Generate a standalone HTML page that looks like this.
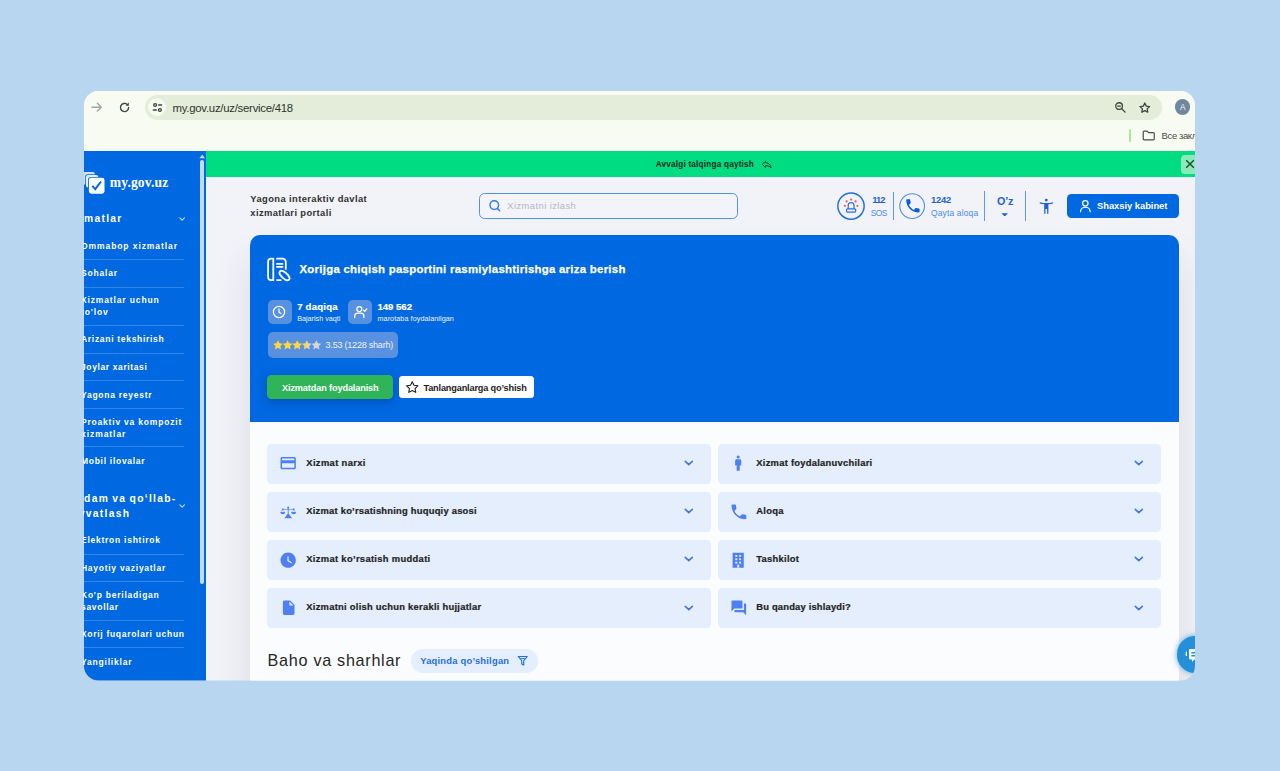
<!DOCTYPE html>
<html lang="uz">
<head>
<meta charset="utf-8">
<title>my.gov.uz — Xorijga chiqish pasportini rasmiylashtirishga ariza berish</title>
<style>
html,body{margin:0;padding:0;}
body{width:1280px;height:771px;overflow:hidden;background:#b9d6f0;position:relative;font-family:"Liberation Sans",sans-serif;}
#win{position:absolute;left:0;top:0;width:1280px;height:771px;clip-path:inset(91px 85px 90.600px 84px round 14.500px);background:#f2f3f8;}
.b{position:absolute;display:block;box-sizing:border-box;}
.t{position:absolute;white-space:nowrap;display:block;}
#nav{position:absolute;left:0;top:0;width:1280px;height:771px;clip-path:inset(151px 1074px 91px 83px);pointer-events:none;}

</style>
</head>
<body>
<div id="win">
<div class="b" style="left:84px;top:91px;width:1112px;height:60.400000000000006px;background:#f8fbf2;border-radius:0px;"></div>
<div class="b" style="left:145px;top:95px;width:1017px;height:25px;background:#e4edda;border-radius:12.5px;"></div>
<svg class="b" style="left:90px;top:101px;" width="13" height="13" viewBox="0 0 13 13"><path d="M1.900 6.200h9.300M7.400 2.300l3.900 3.900-3.900 3.900" fill="none" stroke="#a3a7a0" stroke-width="1.400" stroke-linecap="round" stroke-linejoin="round"/></svg>
<svg class="b" style="left:118px;top:100.5px;" width="13" height="13" viewBox="0 0 24 24"><path d="M19.500 12a7.500 7.500 0 1 1-2.400-5.500" fill="none" stroke="#3e453c" stroke-width="2.500" stroke-linecap="round"/><path d="M20 2.800v6h-6z" fill="#3e453c"/></svg>
<div class="b" style="left:148px;top:98px;width:18px;height:18px;background:#f6faf1;border-radius:9px;"></div>
<svg class="b" style="left:151.5px;top:101.5px;" width="11" height="11" viewBox="0 0 24 24"><g fill="none" stroke="#3e453c" stroke-width="2.900" stroke-linecap="round"><circle cx="6.800" cy="6.500" r="3.100"/><path d="M14.500 6.500h6.500"/><circle cx="17.200" cy="17.500" r="3.100"/><path d="M3 17.500h6.500"/></g></svg>
<span class="t " style="left:172.50px;top:101.00px;font-size:11.4px;line-height:15px;font-weight:400;color:#30342d;letter-spacing:-0.267px;font-family:'Liberation Sans',sans-serif;">my.gov.uz/uz/service/418</span>
<svg class="b" style="left:1114px;top:101.3px;" width="13" height="13" viewBox="0 0 24 24"><g fill="none" stroke="#3e453c" stroke-width="2.400" stroke-linecap="round"><circle cx="9.400" cy="9.400" r="6.200"/><path d="M14.200 14.200l6.300 6.300M6.800 9.400h5.200"/></g></svg>
<svg class="b" style="left:1137.9px;top:100.7px;" width="13.6" height="13.6" viewBox="0 0 24 24"><path d="M12 3.600l2.600 5.400 5.900.8-4.300 4.100 1 5.900-5.200-2.800-5.200 2.800 1-5.900-4.300-4.100 5.900-.8z" fill="none" stroke="#3e453c" stroke-width="2.300" stroke-linejoin="round"/></svg>
<div class="b" style="left:1174.6px;top:99.4px;width:15.600000000000136px;height:15.599999999999994px;background:#70889d;border-radius:8px;"></div>
<span class="t " style="left:1179.90px;top:102.00px;font-size:8.2px;line-height:11px;font-weight:400;color:#f3f6f8;letter-spacing:0.000px;font-family:'Liberation Sans',sans-serif;">A</span>
<div class="b" style="left:1129.1px;top:129.3px;width:1.7000000000000455px;height:12.699999999999989px;background:#aee596;border-radius:1px;"></div>
<svg class="b" style="left:1142.2px;top:130.2px;" width="13.5" height="10.8" viewBox="0 0 27 21.600"><path d="M2.500 4.200a1.800 1.800 0 0 1 1.800-1.800h6.200l2.600 2.700h9.600a1.800 1.800 0 0 1 1.800 1.800v10.900a1.800 1.800 0 0 1-1.800 1.800H4.300a1.800 1.800 0 0 1-1.800-1.800z" fill="none" stroke="#4a4e47" stroke-width="2.400" stroke-linejoin="round"/></svg>
<span class="t " style="left:1161.60px;top:130.00px;font-size:9.5px;line-height:12px;font-weight:400;color:#4a4e47;letter-spacing:-0.400px;font-family:'Liberation Sans',sans-serif;">Все закладки</span>
<div class="b" style="left:84px;top:151px;width:122px;height:530px;background:#0068e1;border-radius:0px;"></div>
<div class="b" style="left:200px;top:160.2px;width:4px;height:424.09999999999997px;background:#c4d9f2;border-radius:2px;"></div>
<svg class="b" style="left:198.8px;top:153.5px;" width="6.4" height="5" viewBox="0 0 6.400 5"><path d="M3.200 0.500L6 4.300H0.400z" fill="#c4d9f2"/></svg>
<svg class="b" style="left:82px;top:171px;" width="24" height="24" viewBox="0 0 24 24"><g>
<rect x="0.600" y="1.100" width="12.400" height="12.400" rx="2.300" fill="#cfe0f8"/>
<rect x="3.200" y="3.200" width="14" height="14" rx="2.600" fill="#0068e1"/>
<rect x="4" y="4" width="12.400" height="12.400" rx="2.200" fill="#e7f0fc"/>
<rect x="6" y="5.900" width="17.200" height="17.600" rx="3" fill="#0068e1"/>
<rect x="6.900" y="6.800" width="15.600" height="15.900" rx="2.400" fill="#ffffff"/>
<path d="M10.300 14.900l3 3.200 5.700-7.600" fill="none" stroke="#0068e1" stroke-width="2"/>
</g></svg>
<span class="t " style="left:109.80px;top:174.00px;font-size:13.6px;line-height:18px;font-weight:700;color:#fff;letter-spacing:0.121px;font-family:'Liberation Serif',serif;">my.gov.uz</span>
<svg class="b" style="left:179.3px;top:217.2px;" width="6.2" height="4.2" viewBox="0 0 6.200 4.200"><path d="M0.800 0.900l2.300 2.300 2.300-2.300" fill="none" stroke="#c9dcf8" stroke-width="1.100" stroke-linecap="round" stroke-linejoin="round"/></svg>
<div class="b" style="left:84px;top:259px;width:100px;height:1px;background:rgba(255,255,255,0.200);border-radius:0px;"></div>
<div class="b" style="left:84px;top:287px;width:100px;height:1px;background:rgba(255,255,255,0.200);border-radius:0px;"></div>
<div class="b" style="left:84px;top:325px;width:100px;height:1px;background:rgba(255,255,255,0.200);border-radius:0px;"></div>
<div class="b" style="left:84px;top:353px;width:100px;height:1px;background:rgba(255,255,255,0.200);border-radius:0px;"></div>
<div class="b" style="left:84px;top:380px;width:100px;height:1px;background:rgba(255,255,255,0.200);border-radius:0px;"></div>
<div class="b" style="left:84px;top:408px;width:100px;height:1px;background:rgba(255,255,255,0.200);border-radius:0px;"></div>
<div class="b" style="left:84px;top:446px;width:100px;height:1px;background:rgba(255,255,255,0.200);border-radius:0px;"></div>
<svg class="b" style="left:179.3px;top:504.2px;" width="6.2" height="4.2" viewBox="0 0 6.200 4.200"><path d="M0.800 0.900l2.300 2.300 2.300-2.300" fill="none" stroke="#c9dcf8" stroke-width="1.100" stroke-linecap="round" stroke-linejoin="round"/></svg>
<div class="b" style="left:84px;top:554px;width:100px;height:1px;background:rgba(255,255,255,0.200);border-radius:0px;"></div>
<div class="b" style="left:84px;top:581px;width:100px;height:1px;background:rgba(255,255,255,0.200);border-radius:0px;"></div>
<div class="b" style="left:84px;top:620px;width:100px;height:1px;background:rgba(255,255,255,0.200);border-radius:0px;"></div>
<div class="b" style="left:84px;top:647px;width:100px;height:1px;background:rgba(255,255,255,0.200);border-radius:0px;"></div>
<div class="b" style="left:206px;top:151.4px;width:990px;height:25.599999999999994px;background:#00dc82;border-radius:0px;"></div>
<span class="t " style="left:655.70px;top:159.00px;font-size:8.2px;line-height:11px;font-weight:700;color:#0f2a1a;letter-spacing:0.206px;font-family:'Liberation Sans',sans-serif;">Avvalgi talqinga qaytish</span>
<svg class="b" style="left:760.5px;top:159.7px;" width="11.5" height="9" viewBox="0 0 23 18"><path d="M9 2.500L2.500 8.800 9 15v-3.800c5 0 8.300 1.300 11.300 4.600-.7-5.600-4-10-11.300-10.400z" fill="none" stroke="#143a24" stroke-width="1.900" stroke-linejoin="round"/></svg>
<div class="b" style="left:1181px;top:155.4px;width:19px;height:18.19999999999999px;background:#8aeab8;border-radius:4px;"></div>
<svg class="b" style="left:1184.5px;top:158.6px;" width="10" height="10" viewBox="0 0 10 10"><path d="M1.200 1.200l7.600 7.600M8.800 1.200L1.200 8.800" fill="none" stroke="#1b4a30" stroke-width="1.400"/></svg>
<span class="t " style="left:250.30px;top:193.00px;font-size:9.4px;line-height:12px;font-weight:700;color:#303030;letter-spacing:0.395px;font-family:'Liberation Sans',sans-serif;">Yagona interaktiv davlat</span>
<span class="t " style="left:250.30px;top:207.00px;font-size:9.4px;line-height:12px;font-weight:700;color:#303030;letter-spacing:0.382px;font-family:'Liberation Sans',sans-serif;">xizmatlari portali</span>
<div class="b" style="left:479px;top:193px;width:259px;height:26px;background:#f3f4f9;border-radius:5.5px;border:1.100px solid #4f92e8;"></div>
<svg class="b" style="left:487.5px;top:198.5px;" width="13" height="13" viewBox="0 0 13 13"><circle cx="6.300" cy="6.100" r="4.300" fill="none" stroke="#2f7be5" stroke-width="1.400"/><path d="M9.500 9.600l2.100 2.200" stroke="#2f7be5" stroke-width="1.500" stroke-linecap="round"/></svg>
<span class="t " style="left:507.30px;top:200.00px;font-size:9.4px;line-height:12px;font-weight:400;color:#b4b6bd;letter-spacing:0.429px;font-family:'Liberation Sans',sans-serif;">Xizmatni izlash</span>
<svg class="b" style="left:836px;top:191px;" width="30" height="30" viewBox="836 191 30 30"><circle cx="851" cy="206.050" r="13.150" fill="none" stroke="#1f6fe0" stroke-width="1.500"/>
<g fill="none" stroke="#2a6fe3" stroke-width="1.250" stroke-linejoin="round">
<path d="M848.200 208.700v-3.300a2.900 2.900 0 0 1 5.800 0v3.300"/><rect x="846.500" y="208.900" width="9.200" height="3.100" rx="1.100"/></g>
<g fill="#ff4d5a"><circle cx="851.100" cy="199.600" r="1.080"/><circle cx="846.600" cy="201.400" r="1.080"/><circle cx="855.600" cy="201.400" r="1.080"/><circle cx="844.800" cy="205.800" r="1.080"/><circle cx="857.400" cy="205.800" r="1.080"/></g></svg>
<span class="t " style="left:872.30px;top:194.00px;font-size:9.4px;line-height:12px;font-weight:700;color:#1d62d6;letter-spacing:-0.950px;font-family:'Liberation Sans',sans-serif;">112</span>
<span class="t " style="left:870.80px;top:208.00px;font-size:8.4px;line-height:11px;font-weight:400;color:#4a8be6;letter-spacing:-0.620px;font-family:'Liberation Sans',sans-serif;">SOS</span>
<div class="b" style="left:892.9px;top:192px;width:1.3999999999999773px;height:28px;background:#5d9ae9;border-radius:0px;"></div>
<svg class="b" style="left:898px;top:192px;" width="28" height="28" viewBox="898 192 28 28"><circle cx="912.150" cy="206.100" r="12.350" fill="none" stroke="#4f8ee6" stroke-width="1.100"/></svg>
<svg class="b" style="left:903.5px;top:197.4px;" width="17.8" height="17.8" viewBox="0 0 24 24"><path d="M6.620 10.790c1.440 2.830 3.760 5.140 6.590 6.590l2.200-2.200c.270-.270.670-.360 1.020-.240 1.120.370 2.330.570 3.570.570.550 0 1 .450 1 1V20c0 .550-.450 1-1 1-9.390 0-17-7.610-17-17 0-.550.450-1 1-1h3.500c.550 0 1 .450 1 1 0 1.250.200 2.450.570 3.570.110.350.030.740-.250 1.020l-2.200 2.200z" fill="#0a5cdc"/></svg>
<span class="t " style="left:931.00px;top:194.00px;font-size:9.4px;line-height:12px;font-weight:700;color:#1d62d6;letter-spacing:-0.237px;font-family:'Liberation Sans',sans-serif;">1242</span>
<span class="t " style="left:931.00px;top:208.00px;font-size:8.4px;line-height:11px;font-weight:400;color:#4a8be6;letter-spacing:0.190px;font-family:'Liberation Sans',sans-serif;">Qayta aloqa</span>
<div class="b" style="left:983.8px;top:191px;width:1.400000000000091px;height:30px;background:#5d9ae9;border-radius:0px;"></div>
<span class="t " style="left:997.00px;top:194.00px;font-size:10.8px;line-height:14px;font-weight:700;color:#1d62d6;letter-spacing:-0.151px;font-family:'Liberation Sans',sans-serif;">O’z</span>
<svg class="b" style="left:1001.2px;top:212.6px;" width="7.4" height="3.8" viewBox="0 0 7.400 3.800"><path d="M0.400 0.300h6.600L3.700 3.600z" fill="#1d62d6"/></svg>
<div class="b" style="left:1025.1px;top:191px;width:1.400000000000091px;height:30px;background:#5d9ae9;border-radius:0px;"></div>
<svg class="b" style="left:1039px;top:198px;" width="15" height="16.5" viewBox="1039 198 15 16.500"><circle cx="1046.300" cy="200.100" r="1.450" fill="#1d62d6"/><path d="M1039.900 202.200c2.100.600 4.200.900 6.400.900s4.300-.300 6.400-.900l.300 1.200c-1.500.450-3 .750-4.600.900v9.400h-1.300v-4.600h-1.600v4.600h-1.300v-9.400c-1.600-.150-3.100-.450-4.600-.900z" fill="#1d62d6"/></svg>
<div class="b" style="left:1066.8px;top:194px;width:112.20000000000005px;height:24px;background:#0068e1;border-radius:4.5px;"></div>
<svg class="b" style="left:1079px;top:199px;" width="13" height="14" viewBox="1079 199 13 14"><g fill="none" stroke="#fff" stroke-width="1.250" stroke-linecap="round"><circle cx="1085.300" cy="203.300" r="2.700"/><path d="M1080.500 211.700a4.850 4.700 0 0 1 9.700 0"/></g></svg>
<span class="t " style="left:1097.00px;top:200.00px;font-size:9.4px;line-height:12px;font-weight:700;color:#fff;letter-spacing:-0.033px;font-family:'Liberation Sans',sans-serif;">Shaxsiy kabinet</span>
<div class="b" style="left:250px;top:235px;width:929px;height:465px;background:#fbfcfe;border-radius:10px;box-shadow:0 26px 40px 2px rgba(20,25,40,0.090);"></div>
<div class="b" style="left:250px;top:235px;width:929px;height:187px;background:#0068e1;border-radius:0px;border-radius:10px 10px 0 0;"></div>
<svg class="b" style="left:266px;top:257px;" width="26" height="26" viewBox="266 257 26 26"><g fill="none" stroke="#fff" stroke-width="1.800" stroke-linecap="round" stroke-linejoin="round">
<path d="M273.300 258.700H271.200a3.100 3.100 0 0 0-3.100 3.100v15.300a3.100 3.100 0 0 0 3.100 3.100h2.100z"/>
<path d="M277 258.700h5.500a3.300 3.300 0 0 1 3.300 3.300v6.900"/>
<path d="M277 263.900h5.500M277 266.900h5.500"/>
<path d="M277 280.100h3.700"/>
<ellipse cx="284.500" cy="275.500" rx="6.200" ry="2.800" transform="rotate(43 284.500 275.500)"/>
</g></svg>
<span class="t " style="left:299.50px;top:262.00px;font-size:11.4px;line-height:15px;font-weight:700;color:#fff;letter-spacing:0.275px;font-family:'Liberation Sans',sans-serif;-webkit-text-stroke:0.250px #fff;">Xorijga chiqish pasportini rasmiylashtirishga ariza berish</span>
<div class="b" style="left:268px;top:300px;width:24px;height:24px;background:#5791df;border-radius:5px;"></div>
<svg class="b" style="left:272.4px;top:304.8px;" width="14" height="14" viewBox="0 0 14 14"><g fill="none" stroke="#fff" stroke-width="1.250" stroke-linecap="round" stroke-linejoin="round"><circle cx="7" cy="7" r="5.600"/><path d="M7 3.900v3.300l2 1.300"/></g></svg>
<span class="t " style="left:297.20px;top:301.00px;font-size:9.6px;line-height:12px;font-weight:700;color:#fff;letter-spacing:0.208px;font-family:'Liberation Sans',sans-serif;-webkit-text-stroke:0.200px #fff;">7 daqiqa</span>
<span class="t " style="left:297.20px;top:314.00px;font-size:7.2px;line-height:9px;font-weight:400;color:#f1f6fd;letter-spacing:0.006px;font-family:'Liberation Sans',sans-serif;">Bajarish vaqti</span>
<div class="b" style="left:348.3px;top:300px;width:23.69999999999999px;height:24px;background:#5791df;border-radius:5px;"></div>
<svg class="b" style="left:353.2px;top:304.6px;" width="15" height="14" viewBox="0 0 15 14"><g fill="none" stroke="#fff" stroke-width="1.300" stroke-linecap="round" stroke-linejoin="round"><circle cx="6.300" cy="4.100" r="2.500"/><path d="M1.700 12.500v-1.300a3.100 3.100 0 0 1 3.100-3.100h3a3.100 3.100 0 0 1 3.100 3.100v1.300"/><path d="M10.600 5.300l1.100 1.100 2-2.400"/></g></svg>
<span class="t " style="left:377.50px;top:301.00px;font-size:9.6px;line-height:12px;font-weight:700;color:#fff;letter-spacing:-0.034px;font-family:'Liberation Sans',sans-serif;-webkit-text-stroke:0.200px #fff;">149 562</span>
<span class="t " style="left:377.50px;top:314.00px;font-size:7.2px;line-height:9px;font-weight:400;color:#f1f6fd;letter-spacing:0.078px;font-family:'Liberation Sans',sans-serif;">marotaba foydalanilgan</span>
<div class="b" style="left:268px;top:332px;width:130px;height:25.5px;background:#5791df;border-radius:5px;"></div>
<svg class="b" style="left:272.8px;top:339.8px;" width="49" height="10" viewBox="0 0 49 10"><defs><linearGradient id="hs" x1="0" x2="1" y1="0" y2="0"><stop offset="0.530" stop-color="#ffd93b"/><stop offset="0.530" stop-color="#d6d6d6"/></linearGradient></defs><path transform="translate(0.0,0)" d="M5 0.200l1.500 3.100 3.400.450-2.500 2.350.650 3.400L5 7.850 1.950 9.500l.650-3.400L0.100 3.750l3.400-.450z" fill="#ffd93b"/><path transform="translate(9.6,0)" d="M5 0.200l1.500 3.100 3.400.450-2.500 2.350.650 3.400L5 7.850 1.950 9.500l.650-3.400L0.100 3.750l3.400-.450z" fill="#ffd93b"/><path transform="translate(19.2,0)" d="M5 0.200l1.500 3.100 3.400.450-2.500 2.350.650 3.400L5 7.850 1.950 9.500l.650-3.400L0.100 3.750l3.400-.450z" fill="#ffd93b"/><path transform="translate(28.799999999999997,0)" d="M5 0.200l1.500 3.100 3.400.450-2.500 2.350.650 3.400L5 7.850 1.950 9.500l.650-3.400L0.100 3.750l3.400-.450z" fill="url(#hs)"/><path transform="translate(38.4,0)" d="M5 0.200l1.500 3.100 3.400.450-2.500 2.350.650 3.400L5 7.850 1.950 9.500l.650-3.400L0.100 3.750l3.400-.450z" fill="#d6d6d6"/></svg>
<span class="t " style="left:325.60px;top:339.00px;font-size:9px;line-height:12px;font-weight:400;color:#eef4fd;letter-spacing:-0.215px;font-family:'Liberation Sans',sans-serif;">3.53 (1228 sharh)</span>
<div class="b" style="left:267.3px;top:375px;width:125.69999999999999px;height:24px;background:#2fb457;border-radius:4.5px;box-shadow:0 3px 9px 1px rgba(0,40,110,0.280);"></div>
<span class="t " style="left:282.00px;top:382.00px;font-size:9.2px;line-height:12px;font-weight:700;color:#fff;letter-spacing:-0.144px;font-family:'Liberation Sans',sans-serif;">Xizmatdan foydalanish</span>
<div class="b" style="left:398.8px;top:376.3px;width:135.2px;height:22.0px;background:#ffffff;border-radius:3.5px;"></div>
<svg class="b" style="left:404.8px;top:380.4px;" width="14.5" height="14.5" viewBox="0 0 24 24"><path d="M12 2.800l2.850 5.900 6.450.9-4.700 4.500 1.150 6.400L12 17.450 6.250 20.500l1.150-6.400-4.700-4.500 6.450-.9z" fill="none" stroke="#1d1d1d" stroke-width="1.800" stroke-linejoin="round"/></svg>
<span class="t " style="left:423.40px;top:382.00px;font-size:9.2px;line-height:12px;font-weight:700;color:#1d1d1d;letter-spacing:-0.170px;font-family:'Liberation Sans',sans-serif;">Tanlanganlarga qo’shish</span>
<div class="b" style="left:267.4px;top:443.5px;width:443.6px;height:40.30000000000001px;background:#e5eefc;border-radius:4.5px;"></div>
<div class="b" style="left:717.8px;top:443.5px;width:443.5px;height:40.30000000000001px;background:#e5eefc;border-radius:4.5px;"></div>
<svg class="b" style="left:279.4px;top:454.45px;" width="18.4" height="18.4" viewBox="0 0 24 24"><path d="M20 4H4c-1.110 0-1.990.890-1.990 2L2 18c0 1.110.890 2 2 2h16c1.110 0 2-.890 2-2V6c0-1.110-.890-2-2-2zm0 14H4v-6h16v6zm0-10H4V6h16v2z" fill="#4f80f3"/></svg>
<svg class="b" style="left:729.4px;top:454.45px;" width="18.4" height="18.4" viewBox="0 0 24 24"><circle cx="12" cy="4" r="2" fill="#4f80f3"/><path d="M14 7h-4c-1.100 0-2 .900-2 2v6h2v7h4v-7h2V9c0-1.100-.900-2-2-2z" fill="#4f80f3"/></svg>
<span class="t " style="left:306.30px;top:457.00px;font-size:9.4px;line-height:12px;font-weight:700;color:#1f1f1f;letter-spacing:0.348px;font-family:'Liberation Sans',sans-serif;-webkit-text-stroke:0.220px #1f1f1f;">Xizmat narxi</span>
<span class="t " style="left:756.30px;top:457.00px;font-size:9.4px;line-height:12px;font-weight:700;color:#1f1f1f;letter-spacing:0.260px;font-family:'Liberation Sans',sans-serif;-webkit-text-stroke:0.220px #1f1f1f;">Xizmat foydalanuvchilari</span>
<svg class="b" style="left:683.9px;top:460.35px;" width="9.6" height="6" viewBox="0 0 9.600 6"><path d="M1.300 1.400l3.500 3.200 3.500-3.200" fill="none" stroke="#3f74ef" stroke-width="1.600" stroke-linecap="round" stroke-linejoin="round"/></svg>
<svg class="b" style="left:1134.2px;top:460.35px;" width="9.6" height="6" viewBox="0 0 9.600 6"><path d="M1.300 1.400l3.500 3.200 3.500-3.200" fill="none" stroke="#3f74ef" stroke-width="1.600" stroke-linecap="round" stroke-linejoin="round"/></svg>
<div class="b" style="left:267.4px;top:491.55px;width:443.6px;height:40.30000000000001px;background:#e5eefc;border-radius:4.5px;"></div>
<div class="b" style="left:717.8px;top:491.55px;width:443.5px;height:40.30000000000001px;background:#e5eefc;border-radius:4.5px;"></div>
<svg class="b" style="left:279.4px;top:502.5px;" width="18.4" height="18.4" viewBox="0 0 18.400 18.400"><g fill="#4f80f3"><circle cx="9.200" cy="4.400" r="1"/>
<path d="M8.750 4.400h.9v6.200l3.300 4.600H5.450l3.300-4.600z"/>
<path d="M2.700 5.900h13v.850h-13z" opacity="0.750"/>
<rect x="2.900" y="5.400" width="1.700" height="1.800" rx="0.300" opacity="0.850"/><rect x="13.800" y="5.400" width="1.700" height="1.800" rx="0.300" opacity="0.850"/>
<path d="M1.300 9h4.900a2.450 2.350 0 0 1-4.900 0zM12.200 9h4.900a2.450 2.350 0 0 1-4.900 0z"/>
<path d="M3.750 6.800L1.500 9h.8l1.450-1.400L5.200 9h.8zM14.650 6.800L12.400 9h.8l1.450-1.400L16.100 9h.8z" opacity="0.550"/></g></svg>
<svg class="b" style="left:728.7px;top:501.8px;" width="19.8" height="19.8" viewBox="0 0 24 24"><path d="M6.620 10.790c1.440 2.830 3.760 5.140 6.590 6.590l2.200-2.200c.270-.270.670-.360 1.020-.240 1.120.370 2.330.570 3.570.570.550 0 1 .450 1 1V20c0 .550-.450 1-1 1-9.390 0-17-7.610-17-17 0-.550.450-1 1-1h3.500c.550 0 1 .450 1 1 0 1.250.200 2.450.570 3.570.110.350.030.740-.250 1.020l-2.200 2.200z" fill="#4f80f3"/></svg>
<span class="t " style="left:306.30px;top:505.00px;font-size:9.4px;line-height:12px;font-weight:700;color:#1f1f1f;letter-spacing:0.228px;font-family:'Liberation Sans',sans-serif;-webkit-text-stroke:0.220px #1f1f1f;">Xizmat ko’rsatishning huquqiy asosi</span>
<span class="t " style="left:756.30px;top:505.00px;font-size:9.4px;line-height:12px;font-weight:700;color:#1f1f1f;letter-spacing:0.272px;font-family:'Liberation Sans',sans-serif;-webkit-text-stroke:0.220px #1f1f1f;">Aloqa</span>
<svg class="b" style="left:683.9px;top:508.4px;" width="9.6" height="6" viewBox="0 0 9.600 6"><path d="M1.300 1.400l3.500 3.200 3.500-3.200" fill="none" stroke="#3f74ef" stroke-width="1.600" stroke-linecap="round" stroke-linejoin="round"/></svg>
<svg class="b" style="left:1134.2px;top:508.4px;" width="9.6" height="6" viewBox="0 0 9.600 6"><path d="M1.300 1.400l3.500 3.200 3.500-3.200" fill="none" stroke="#3f74ef" stroke-width="1.600" stroke-linecap="round" stroke-linejoin="round"/></svg>
<div class="b" style="left:267.4px;top:539.6px;width:443.6px;height:40.299999999999955px;background:#e5eefc;border-radius:4.5px;"></div>
<div class="b" style="left:717.8px;top:539.6px;width:443.5px;height:40.299999999999955px;background:#e5eefc;border-radius:4.5px;"></div>
<svg class="b" style="left:279.4px;top:550.55px;" width="18.4" height="18.4" viewBox="0 0 24 24"><path d="M12 2C6.500 2 2 6.500 2 12s4.500 10 10 10 10-4.500 10-10S17.500 2 12 2zm4.200 14.200L11 13V7h1.500v5.200l4.500 2.700-.800 1.300z" fill="#4f80f3"/></svg>
<svg class="b" style="left:729.4px;top:550.55px;" width="18.4" height="18.4" viewBox="0 0 24 24"><path d="M4.700 2.300h14.600v19.500H4.700z" fill="#4f80f3"/><g fill="#e5eefc"><rect x="8.200" y="5.200" width="2.600" height="2.300"/><rect x="13.200" y="5.200" width="2.600" height="2.300"/><rect x="8.200" y="9.600" width="2.600" height="2.300"/><rect x="13.200" y="9.600" width="2.600" height="2.300"/><rect x="8.200" y="14" width="2.600" height="2.300"/><rect x="13.200" y="14" width="2.600" height="2.300"/><rect x="10.700" y="17.700" width="2.600" height="4.100"/></g></svg>
<span class="t " style="left:306.30px;top:553.00px;font-size:9.4px;line-height:12px;font-weight:700;color:#1f1f1f;letter-spacing:0.322px;font-family:'Liberation Sans',sans-serif;-webkit-text-stroke:0.220px #1f1f1f;">Xizmat ko’rsatish muddati</span>
<span class="t " style="left:756.30px;top:553.00px;font-size:9.4px;line-height:12px;font-weight:700;color:#1f1f1f;letter-spacing:0.267px;font-family:'Liberation Sans',sans-serif;-webkit-text-stroke:0.220px #1f1f1f;">Tashkilot</span>
<svg class="b" style="left:683.9px;top:556.45px;" width="9.6" height="6" viewBox="0 0 9.600 6"><path d="M1.300 1.400l3.500 3.200 3.500-3.200" fill="none" stroke="#3f74ef" stroke-width="1.600" stroke-linecap="round" stroke-linejoin="round"/></svg>
<svg class="b" style="left:1134.2px;top:556.45px;" width="9.6" height="6" viewBox="0 0 9.600 6"><path d="M1.300 1.400l3.500 3.200 3.500-3.200" fill="none" stroke="#3f74ef" stroke-width="1.600" stroke-linecap="round" stroke-linejoin="round"/></svg>
<div class="b" style="left:267.4px;top:587.65px;width:443.6px;height:40.299999999999955px;background:#e5eefc;border-radius:4.5px;"></div>
<div class="b" style="left:717.8px;top:587.65px;width:443.5px;height:40.299999999999955px;background:#e5eefc;border-radius:4.5px;"></div>
<svg class="b" style="left:279.9px;top:599.1px;" width="17.4" height="17.4" viewBox="0 0 24 24"><path d="M6 2c-1.100 0-1.990.900-1.990 2L4 20c0 1.100.890 2 1.990 2H18c1.100 0 2-.900 2-2V8l-6-6H6zm7 7V3.500L18.500 9H13z" fill="#4f80f3"/></svg>
<svg class="b" style="left:729.8px;top:599.0px;" width="17.6" height="17.6" viewBox="0 0 24 24"><path d="M21 6h-2v9H6v2c0 .550.450 1 1 1h11l4 4V7c0-.550-.450-1-1-1zm-4 6V3c0-.550-.450-1-1-1H3c-.550 0-1 .450-1 1v14l4-4h10c.550 0 1-.450 1-1z" fill="#4f80f3"/></svg>
<span class="t " style="left:306.30px;top:601.00px;font-size:9.4px;line-height:12px;font-weight:700;color:#1f1f1f;letter-spacing:0.260px;font-family:'Liberation Sans',sans-serif;-webkit-text-stroke:0.220px #1f1f1f;">Xizmatni olish uchun kerakli hujjatlar</span>
<span class="t " style="left:756.30px;top:601.00px;font-size:9.4px;line-height:12px;font-weight:700;color:#1f1f1f;letter-spacing:0.183px;font-family:'Liberation Sans',sans-serif;-webkit-text-stroke:0.220px #1f1f1f;">Bu qanday ishlaydi?</span>
<svg class="b" style="left:683.9px;top:604.5px;" width="9.6" height="6" viewBox="0 0 9.600 6"><path d="M1.300 1.400l3.500 3.200 3.500-3.200" fill="none" stroke="#3f74ef" stroke-width="1.600" stroke-linecap="round" stroke-linejoin="round"/></svg>
<svg class="b" style="left:1134.2px;top:604.5px;" width="9.6" height="6" viewBox="0 0 9.600 6"><path d="M1.300 1.400l3.500 3.200 3.500-3.200" fill="none" stroke="#3f74ef" stroke-width="1.600" stroke-linecap="round" stroke-linejoin="round"/></svg>
<span class="t " style="left:267.60px;top:650.00px;font-size:16.2px;line-height:21px;font-weight:400;color:#262626;letter-spacing:0.702px;font-family:'Liberation Sans',sans-serif;">Baho va sharhlar</span>
<div class="b" style="left:411.3px;top:649.3px;width:127.19999999999999px;height:23.5px;background:#e5eefc;border-radius:11.75px;"></div>
<span class="t " style="left:420.20px;top:655.00px;font-size:9.4px;line-height:12px;font-weight:700;color:#1f6fe0;letter-spacing:0.223px;font-family:'Liberation Sans',sans-serif;">Yaqinda qo’shilgan</span>
<svg class="b" style="left:516.5px;top:655px;" width="11.5" height="12" viewBox="0 0 23 24"><path d="M2.500 3h18l-7 8.500V20l-4-2.200v-6.300z" fill="none" stroke="#1f6fe0" stroke-width="2.300" stroke-linejoin="round"/><path d="M6.500 7.300h10" stroke="#1f6fe0" stroke-width="2"/></svg>
<div class="b" style="left:1176.5px;top:636.3px;width:36.59999999999991px;height:36.60000000000002px;background:#2590d9;border-radius:18.3px;box-shadow:0 0 5px 1px rgba(37,144,217,0.550);"></div>
<svg class="b" style="left:1184.5px;top:647.5px;" width="16" height="15" viewBox="1184.500 647.500 16 15"><rect x="1185.200" y="651.100" width="1.300" height="4.500" rx="0.500" fill="#fff"/><path d="M1188.600 648.400h11.900v10.500h-6.600l-2.300 2.700v-2.700h-2.200a.8.800 0 0 1-.8-.8v-8.900a.8.800 0 0 1 .8-.8z" fill="#fff"/><path d="M1190.800 652.300h9M1190.800 655.300h9" stroke="#2590d9" stroke-width="1.400"/></svg>
</div>
<div id="nav">
<span class="t " style="left:65.20px;top:212.00px;font-size:10.3px;line-height:13px;font-weight:700;color:#ffffff;letter-spacing:1.300px;font-family:'Liberation Sans',sans-serif;word-spacing:-1.00px;">Xizmatlar</span>
<span class="t " style="left:81.00px;top:241.00px;font-size:8.5px;line-height:11px;font-weight:700;color:#ffffff;letter-spacing:0.922px;font-family:'Liberation Sans',sans-serif;">Ommabop xizmatlar</span>
<span class="t " style="left:81.00px;top:268.00px;font-size:8.5px;line-height:11px;font-weight:700;color:#ffffff;letter-spacing:0.804px;font-family:'Liberation Sans',sans-serif;">Sohalar</span>
<span class="t " style="left:81.00px;top:295.00px;font-size:8.5px;line-height:11px;font-weight:700;color:#ffffff;letter-spacing:0.861px;font-family:'Liberation Sans',sans-serif;">Xizmatlar uchun</span>
<span class="t " style="left:81.00px;top:307.00px;font-size:8.5px;line-height:11px;font-weight:700;color:#ffffff;letter-spacing:0.895px;font-family:'Liberation Sans',sans-serif;">to&#x27;lov</span>
<span class="t " style="left:81.00px;top:334.00px;font-size:8.5px;line-height:11px;font-weight:700;color:#ffffff;letter-spacing:0.697px;font-family:'Liberation Sans',sans-serif;">Arizani tekshirish</span>
<span class="t " style="left:81.00px;top:362.00px;font-size:8.5px;line-height:11px;font-weight:700;color:#ffffff;letter-spacing:0.616px;font-family:'Liberation Sans',sans-serif;">Joylar xaritasi</span>
<span class="t " style="left:81.00px;top:390.00px;font-size:8.5px;line-height:11px;font-weight:700;color:#ffffff;letter-spacing:0.735px;font-family:'Liberation Sans',sans-serif;">Yagona reyestr</span>
<span class="t " style="left:81.00px;top:417.00px;font-size:8.5px;line-height:11px;font-weight:700;color:#ffffff;letter-spacing:0.799px;font-family:'Liberation Sans',sans-serif;">Proaktiv va kompozit</span>
<span class="t " style="left:81.00px;top:429.00px;font-size:8.5px;line-height:11px;font-weight:700;color:#ffffff;letter-spacing:0.944px;font-family:'Liberation Sans',sans-serif;">xizmatlar</span>
<span class="t " style="left:81.00px;top:456.00px;font-size:8.5px;line-height:11px;font-weight:700;color:#ffffff;letter-spacing:0.714px;font-family:'Liberation Sans',sans-serif;">Mobil ilovalar</span>
<span class="t " style="left:63.82px;top:492.00px;font-size:10.3px;line-height:13px;font-weight:700;color:#ffffff;letter-spacing:1.300px;font-family:'Liberation Sans',sans-serif;word-spacing:-1.00px;">Yordam va qo‘llab-</span>
<span class="t " style="left:63.49px;top:507.00px;font-size:10.3px;line-height:13px;font-weight:700;color:#ffffff;letter-spacing:1.300px;font-family:'Liberation Sans',sans-serif;word-spacing:-1.00px;">quvvatlash</span>
<span class="t " style="left:81.00px;top:535.00px;font-size:8.5px;line-height:11px;font-weight:700;color:#ffffff;letter-spacing:0.746px;font-family:'Liberation Sans',sans-serif;">Elektron ishtirok</span>
<span class="t " style="left:81.00px;top:563.00px;font-size:8.5px;line-height:11px;font-weight:700;color:#ffffff;letter-spacing:0.729px;font-family:'Liberation Sans',sans-serif;">Hayotiy vaziyatlar</span>
<span class="t " style="left:81.00px;top:590.00px;font-size:8.5px;line-height:11px;font-weight:700;color:#ffffff;letter-spacing:0.770px;font-family:'Liberation Sans',sans-serif;">Ko&#x27;p beriladigan</span>
<span class="t " style="left:81.00px;top:602.00px;font-size:8.5px;line-height:11px;font-weight:700;color:#ffffff;letter-spacing:0.695px;font-family:'Liberation Sans',sans-serif;">savollar</span>
<span class="t " style="left:81.00px;top:629.00px;font-size:8.5px;line-height:11px;font-weight:700;color:#ffffff;letter-spacing:0.699px;font-family:'Liberation Sans',sans-serif;">Xorij fuqarolari uchun</span>
<span class="t " style="left:81.00px;top:657.00px;font-size:8.5px;line-height:11px;font-weight:700;color:#ffffff;letter-spacing:0.798px;font-family:'Liberation Sans',sans-serif;">Yangiliklar</span>
</div>
</body>
</html>
